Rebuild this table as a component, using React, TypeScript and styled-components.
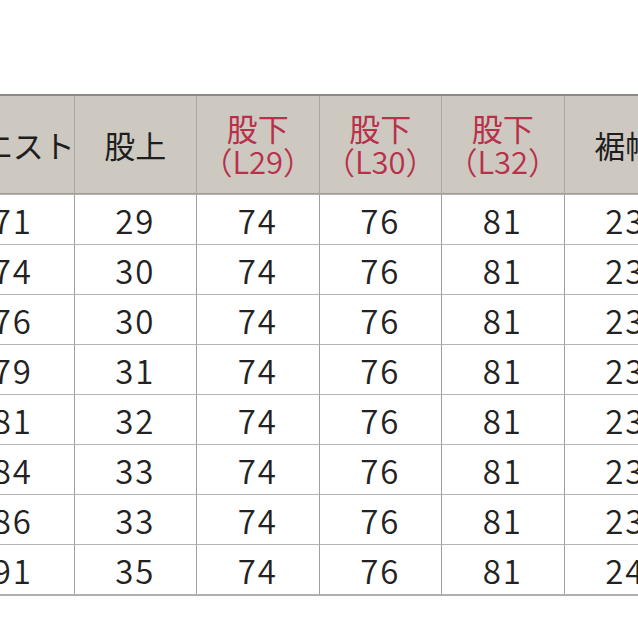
import React from "react";
import styled, { createGlobalStyle } from "styled-components";

const Global = createGlobalStyle`
  html, body { margin: 0; padding: 0; background: #ffffff; }
  body { width: 638px; height: 638px; overflow: hidden; font-family: "Noto Sans CJK JP", "Noto Sans", sans-serif; }
`;

const Page = styled.div`
  width: 638px;
  height: 638px;
  overflow: hidden;
  padding-top: 94px;
  box-sizing: border-box;
`;

const Table = styled.div`
  margin-left: -49px;
  width: 735px;
  display: grid;
  grid-template-columns: repeat(6, 122.5px);
  border-top: 2px solid #8e8b85;
  border-bottom: 2px solid #b0b0b0;
`;

const HeadCell = styled.div<{ $red?: boolean }>`
  height: 98px;
  background: #cdc9c1;
  display: flex;
  flex-direction: column;
  align-items: center;
  justify-content: center;
  border-left: 1px solid #aca79f;
  border-bottom: 1px solid #9f9b95;
  box-sizing: border-box;
  color: ${(p) => (p.$red ? "#b8304a" : "#1e1e1e")};
  font-size: 31px;
  line-height: 32px;
  white-space: nowrap;
`;

const Sub = styled.span`
  font-size: 31px;
  font-weight: 350;
  margin-top: 1px;
`;

const Cell = styled.div`
  height: 50px;
  display: flex;
  align-items: center;
  justify-content: center;
  border-left: 1px solid #a0a0a0;
  border-top: 1px solid #b4b4b4;
  color: #222222;
  font-size: 33px;
  font-weight: 350;
  letter-spacing: 2px;
  line-height: 1;
  padding-top: 1px;
  box-sizing: border-box;
`;

const headers: { label: string; sub?: string }[] = [
  { label: "ウエスト" },
  { label: "股上" },
  { label: "股下", sub: "（L29）" },
  { label: "股下", sub: "（L30）" },
  { label: "股下", sub: "（L32）" },
  { label: "裾幅" },
];

const rows: string[][] = [
  ["71", "29", "74", "76", "81", "23"],
  ["74", "30", "74", "76", "81", "23"],
  ["76", "30", "74", "76", "81", "23"],
  ["79", "31", "74", "76", "81", "23"],
  ["81", "32", "74", "76", "81", "23"],
  ["84", "33", "74", "76", "81", "23"],
  ["86", "33", "74", "76", "81", "23"],
  ["91", "35", "74", "76", "81", "24"],
];

export default function App() {
  return (
    <>
      <Global />
      <Page>
        <Table>
          {headers.map((h, i) => (
            <HeadCell key={i} $red={!!h.sub}>
              <span>{h.label}</span>
              {h.sub && <Sub>{h.sub}</Sub>}
            </HeadCell>
          ))}
          {rows.map((r, ri) =>
            r.map((v, ci) => <Cell key={`${ri}-${ci}`}>{v}</Cell>)
          )}
        </Table>
      </Page>
    </>
  );
}
